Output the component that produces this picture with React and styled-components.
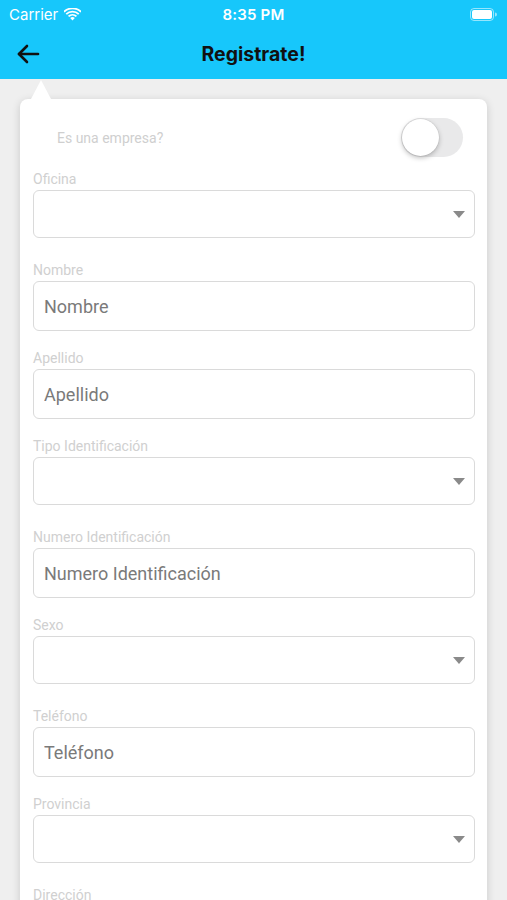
import React from "react";
import styled, { createGlobalStyle } from "styled-components";

const Global = createGlobalStyle`
  html, body { margin: 0; padding: 0; background: #efefef; }
  * { box-sizing: border-box; }
`;

const Screen = styled.div`
  width: 507px;
  height: 900px;
  overflow: hidden;
  background: #efefef;
  font-family: Roboto, "Liberation Sans", sans-serif;
`;

const Header = styled.header`
  background: #17c7fb;
  height: 79px;
  display: flex;
  flex-direction: column;
`;

const StatusBar = styled.div`
  height: 28px;
  display: grid;
  grid-template-columns: 1fr auto 1fr;
  align-items: center;
  padding: 0 9px;
  color: #fff;
  font-family: Inter, "Liberation Sans", sans-serif;
  font-size: 15px;
`;

const StatusLeft = styled.div`
  display: flex;
  align-items: center;
  gap: 6px;
  font-weight: 400;
`;

const Time = styled.div`
  font-weight: 600;
  letter-spacing: 0.2px;
`;

const StatusRight = styled.div`
  display: flex;
  justify-content: flex-end;
  padding-right: 1px;
`;

const NavBar = styled.div`
  flex: 1;
  position: relative;
  display: flex;
  align-items: center;
  justify-content: center;
`;

const BackButton = styled.button`
  position: absolute;
  left: 15px;
  top: 50%;
  transform: translateY(-50%);
  background: none;
  border: 0;
  padding: 0;
  display: flex;
`;

const Title = styled.h1`
  margin: 0;
  font-family: Inter, "Liberation Sans", sans-serif;
  font-weight: 700;
  font-size: 19.5px;
  color: #111;
`;

const Content = styled.main`
  padding: 20px 20px 0;
`;

const Card = styled.section`
  position: relative;
  background: #fff;
  border-radius: 8px;
  padding: 19px 12px 0 13px;
  box-shadow: 0 2px 8px rgba(0, 0, 0, 0.16);
  &::before {
    content: "";
    position: absolute;
    left: 11px;
    top: -19px;
    border-left: 10px solid transparent;
    border-right: 10px solid transparent;
    border-bottom: 19px solid #fff;
  }
`;

const ToggleRow = styled.div`
  height: 39px;
  display: flex;
  align-items: center;
  justify-content: space-between;
  padding: 0 12px 0 24px;
  margin-bottom: 13px;
`;

const ToggleLabel = styled.span`
  font-size: 14px;
  color: #cfcfcf;
`;

const Switch = styled.div`
  width: 62px;
  height: 39px;
  border-radius: 20px;
  background: #e9e9ea;
  position: relative;
  &::after {
    content: "";
    position: absolute;
    left: 1px;
    top: 1px;
    width: 37px;
    height: 37px;
    border-radius: 50%;
    background: #fff;
    box-shadow: 0 2px 5px rgba(0, 0, 0, 0.25), 0 0 0 0.5px rgba(0, 0, 0, 0.08);
  }
`;

const Field = styled.div`
  display: flex;
  flex-direction: column;
  margin-bottom: ${(p) => (p.$select ? 23 : 18)}px;
`;

const Label = styled.label`
  font-size: 14px;
  line-height: 18px;
  color: #d0d0d0;
  margin-bottom: 2px;
`;

const Input = styled.input`
  height: 50px;
  border: 1px solid #dadada;
  border-radius: 6px;
  padding: 0 10px;
  font-family: Roboto, "Liberation Sans", sans-serif;
  font-size: 18px;
  color: #333;
  background: #fff;
  outline: none;
  &::placeholder { color: #7a7a7a; }
`;

const SelectBox = styled.div`
  height: 48px;
  border: 1px solid #dadada;
  border-radius: 6px;
  background: #fff;
  display: flex;
  align-items: center;
  justify-content: flex-end;
  padding-right: 9px;
`;

const Arrow = () => (
  <svg width="12" height="7" viewBox="0 0 12 7">
    <path d="M0 0h12L6 7z" fill="#8a8a8a" />
  </svg>
);

const fields = [
  { label: "Oficina", select: true },
  { label: "Nombre", placeholder: "Nombre" },
  { label: "Apellido", placeholder: "Apellido" },
  { label: "Tipo Identificación", select: true },
  { label: "Numero Identificación", placeholder: "Numero Identificación" },
  { label: "Sexo", select: true },
  { label: "Teléfono", placeholder: "Teléfono" },
  { label: "Provincia", select: true },
  { label: "Dirección", placeholder: "Dirección" },
];

export default function App() {
  return (
    <>
      <Global />
      <Screen>
        <Header>
          <StatusBar>
            <StatusLeft>
              <span>Carrier</span>
              <svg width="17" height="13" viewBox="0 0 17 13">
                <path d="M8.5 12.5 6.2 10.1a3.3 3.3 0 0 1 4.6 0z" fill="#fff" />
                <path d="M3.9 7.8a6.6 6.6 0 0 1 9.2 0l-1.3 1.3a4.8 4.8 0 0 0-6.6 0z" fill="#fff" />
                <path d="M1.6 5.5a9.9 9.9 0 0 1 13.8 0l-1.3 1.3a8.1 8.1 0 0 0-11.2 0z" fill="#fff" />
                <path d="M-.7 3.2a13.2 13.2 0 0 1 18.4 0l-1.3 1.3A11.4 11.4 0 0 0 .6 4.5z" fill="#fff" />
              </svg>
            </StatusLeft>
            <Time>8:35 PM</Time>
            <StatusRight>
              <svg width="27" height="13" viewBox="0 0 27 13">
                <rect x="0.5" y="0.5" width="23" height="12" rx="3.5" fill="none" stroke="rgba(255,255,255,0.55)" />
                <rect x="2" y="2" width="20" height="9" rx="2" fill="#fff" />
                <path d="M25 4.5v4a2 2 0 0 0 0-4z" fill="rgba(255,255,255,0.55)" />
              </svg>
            </StatusRight>
          </StatusBar>
          <NavBar>
            <BackButton aria-label="Volver">
              <svg width="26" height="22" viewBox="0 0 26 22" fill="none" stroke="#111" strokeWidth="2.6" strokeLinecap="round" strokeLinejoin="round">
                <path d="M23 11H4" />
                <path d="M12 3 4 11l8 8" />
              </svg>
            </BackButton>
            <Title>Registrate!</Title>
          </NavBar>
        </Header>
        <Content>
          <Card>
            <ToggleRow>
              <ToggleLabel>Es una empresa?</ToggleLabel>
              <Switch />
            </ToggleRow>
            {fields.map((f) => (
              <Field key={f.label} $select={f.select}>
                <Label>{f.label}</Label>
                {f.select ? (
                  <SelectBox>
                    <Arrow />
                  </SelectBox>
                ) : (
                  <Input placeholder={f.placeholder} />
                )}
              </Field>
            ))}
          </Card>
        </Content>
      </Screen>
    </>
  );
}
